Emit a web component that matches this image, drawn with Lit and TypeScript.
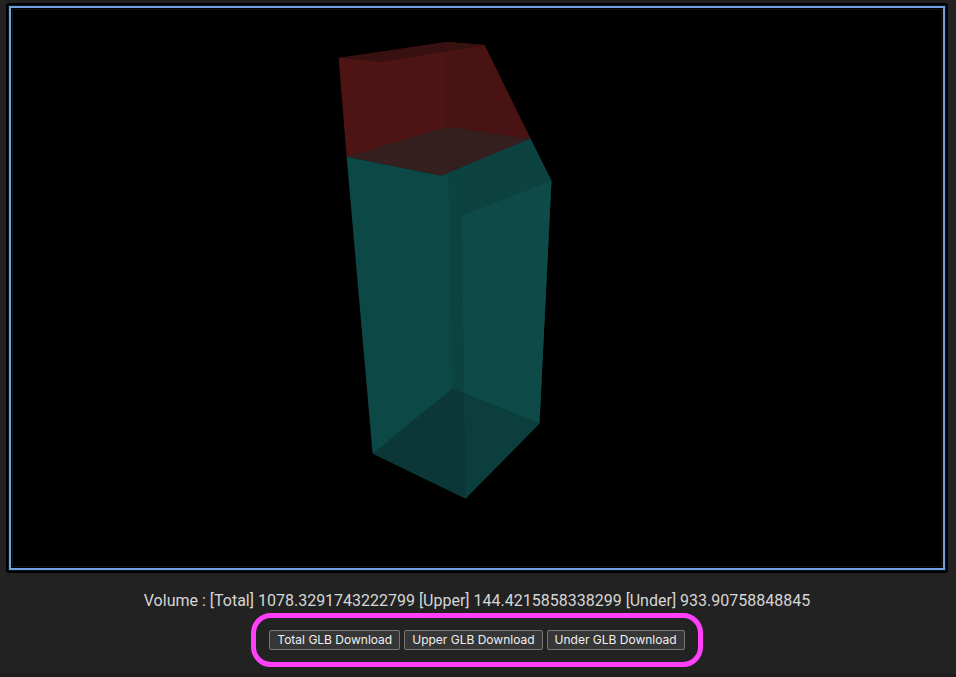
import { LitElement, html, css, svg } from "lit";
import { customElement, property } from "lit/decorators.js";

interface Face {
  points: string;
  fill: string;
}

const FACES: Face[] = [
  // upper part
  { points: "339,58 447,42 485,45 531,139 442,176 347,157", fill: "#4e1414" },
  { points: "447,42 485,45 531,139 446,127", fill: "#491313" },
  { points: "339,58 447,42 485,45 382,62", fill: "#371010" },
  // cut plane
  { points: "347,157 447,127 531,139 442,176", fill: "#361f1f" },
  { points: "447,127 531,139 449,173", fill: "#341e1e" },
  // lower part
  { points: "347,157 442,176 531,139 552,181 540,424 466,499 373,454", fill: "#0c4846" },
  { points: "449,173 531,139 552,181 462,216 465,394 453,389", fill: "#0c4341" },
  { points: "462,216 552,181 540,424 465,394", fill: "#0e4a48" },
  { points: "373,454 453,389 465,394 466,499", fill: "#0b3837" },
  { points: "465,394 540,424 466,499", fill: "#0b3e3c" },
];

@customElement("model-viewer-canvas")
export class ModelViewerCanvas extends LitElement {
  static styles = css`
    :host {
      display: block;
      padding: 3px;
      border-radius: 3px;
      background: #000;
    }
    .stage {
      border: 2px solid #739fdf;
      background: #000;
      box-shadow: 0 0 0 1px #0d1521, inset 0 0 0 1px #000, inset 0 0 0 2px #0d131c;
    }
    .scene {
      display: block;
      width: 100%;
    }
  `;

  render() {
    return html`<div class="stage">
      <svg class="scene" viewBox="11 8 933 561" role="img" aria-label="Divided solid">
        ${FACES.map((f) => svg`<polygon points=${f.points} fill=${f.fill}></polygon>`)}
      </svg>
    </div>`;
  }
}

@customElement("app-root")
export class AppRoot extends LitElement {
  @property({ attribute: false }) total = "1078.3291743222799";
  @property({ attribute: false }) upper = "144.4215858338299";
  @property({ attribute: false }) under = "933.90758848845";

  static styles = css`
    :host {
      display: flex;
      flex-direction: column;
      box-sizing: border-box;
      min-height: 100vh;
      padding: 3px 8px 0 6px;
      border-bottom: 3px solid #1f1c1e;
      background: #222;
      color: #d6d6d6;
      font-family: Roboto, "Liberation Sans", sans-serif;
    }
    .volume {
      margin: 16px 0 0;
      text-align: center;
      font-size: 16px;
      line-height: 24px;
    }
    .downloads {
      display: flex;
      align-self: center;
      gap: 4px;
      padding: 12px 13px;
      border: 5px solid #ff40fb;
      border-radius: 20px;
    }
    .download {
      height: 20px;
      padding: 0 7px;
      border: 1px solid #777;
      border-radius: 2px;
      background: #363636;
      color: #f0f0f0;
      font: 12px/18px Inter, "Liberation Sans", sans-serif;
      white-space: nowrap;
    }
  `;

  render() {
    return html`
      <model-viewer-canvas></model-viewer-canvas>
      <p class="volume">Volume : [Total] ${this.total} [Upper] ${this.upper} [Under] ${this.under}</p>
      <div class="downloads">
        ${["Total", "Upper", "Under"].map(
          (part) => html`<button class="download" type="button">${part} GLB Download</button>`
        )}
      </div>
    `;
  }
}
